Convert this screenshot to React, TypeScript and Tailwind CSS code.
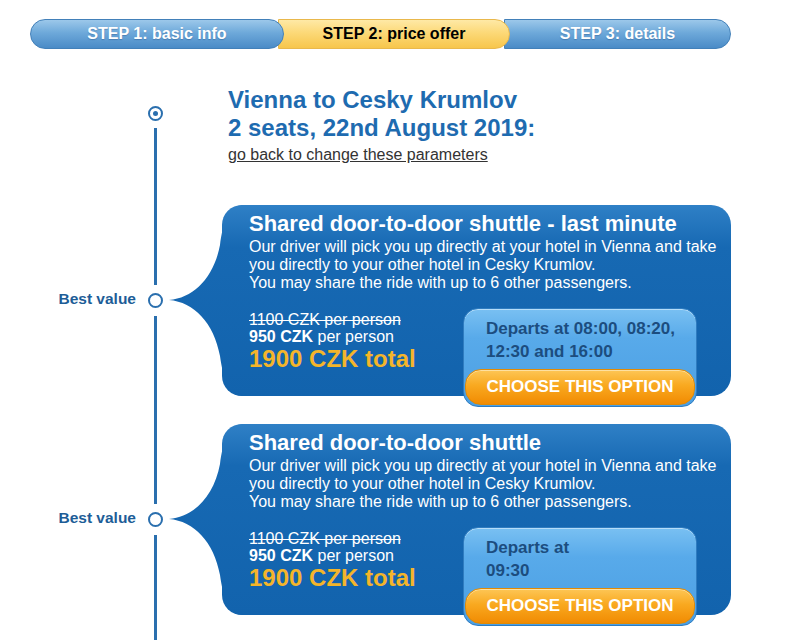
import React from 'react';

const RAIL = 'bg-[#2a6fae]';

const StepBar = () => (
  <div className="flex pl-[30px] pt-[19px]">
    <div className="relative z-[3] flex h-[30px] w-[254px] items-center justify-center rounded-full border border-[#4280b9] bg-[linear-gradient(180deg,#9cc8ea_0%,#6ea9da_45%,#4a8bc7_100%)] text-[16px] font-bold text-white [text-shadow:0_1px_1px_rgba(30,70,120,0.35)]">
      STEP 1: basic info
    </div>
    <div className="relative z-[2] -ml-[6px] flex h-[30px] w-[232px] items-center justify-center rounded-r-full border border-[#e9b84c] bg-[linear-gradient(180deg,#fee9a6_0%,#fcd978_45%,#f7c64c_100%)] text-[16px] font-bold text-black">
      STEP 2: price offer
    </div>
    <div className="relative z-[1] -ml-[6px] flex h-[30px] w-[227px] items-center justify-center rounded-r-full border border-[#4280b9] bg-[linear-gradient(180deg,#9cc8ea_0%,#6ea9da_45%,#4a8bc7_100%)] text-[16px] font-bold text-white [text-shadow:0_1px_1px_rgba(30,70,120,0.35)]">
      STEP 3: details
    </div>
  </div>
);

const Connector = () => (
  <svg
    className="absolute -left-[60px] top-0"
    width="82"
    height="191"
    viewBox="0 0 82 191"
  >
    <defs>
      <linearGradient id="cardfill" x1="0" y1="0" x2="0" y2="191" gradientUnits="userSpaceOnUse">
        <stop offset="0" stopColor="#2f80c6" />
        <stop offset="0.22" stopColor="#1769b3" />
        <stop offset="1" stopColor="#1263ad" />
      </linearGradient>
    </defs>
    <path
      d="M7,95 C32,93 52,72 58,40 C61,18 66,0 82,0 L82,191 C66,191 61,172 58,151 C52,118 32,97 7,95 Z"
      fill="url(#cardfill)"
    />
  </svg>
);

interface OfferProps {
  title: string;
  departs: React.ReactNode;
}

const OfferCard = ({ title, departs }: OfferProps) => (
  <div className="relative h-[191px] w-[509px] rounded-[20px] bg-[linear-gradient(180deg,#2f80c6_0%,#1769b3_22%,#1263ad_100%)] text-white">
    <Connector />
    <div className="relative pl-[27px] pt-[6px]">
      <h2 className="text-[22px] font-bold leading-[26px]">{title}</h2>
      <p className="mt-[1px] text-[16px] leading-[18px]">
        Our driver will pick you up directly at your hotel in Vienna and take
        <br />
        you directly to your other hotel in Cesky Krumlov.
        <br />
        You may share the ride with up to 6 other passengers.
      </p>
      <div className="mt-[16px] flex items-start">
        <div className="w-[214px] pt-[3px]">
          <div className="text-[16px] leading-[17px] line-through">1100 CZK per person</div>
          <div className="text-[16px] leading-[18px]">
            <span className="font-bold">950 CZK</span> per person
          </div>
          <div className="text-[24px] font-bold leading-[26px] text-[#f4b52a]">
            1900 CZK total
          </div>
        </div>
        <div className="flex h-[99px] w-[234px] flex-col rounded-[15px] border border-[#2f7cc0] bg-[linear-gradient(180deg,#79c0f2_0%,#58aaea_30%,#4b9fe3_100%)] p-[1px] shadow-[inset_0_1px_0_#b5ddf9]">
          <div className="flex-1 pl-[21px] pt-[7px] text-[17px] font-bold leading-[23px] text-[#1c4d7f]">
            {departs}
          </div>
          <button
            type="button"
            className="h-[36px] w-full rounded-[16px] border border-[#e08a06] bg-[linear-gradient(180deg,#fdc656_0%,#f9a920_45%,#f18b02_100%)] text-[17px] font-bold text-white shadow-[inset_0_1px_0_#fee0a0]"
          >
            CHOOSE THIS OPTION
          </button>
        </div>
      </div>
    </div>
  </div>
);

const RailLine = ({ className = '' }: { className?: string }) => (
  <div className={`w-[3px] ${RAIL} ${className}`} />
);

const OfferRow = (props: OfferProps) => (
  <>
    <div className="flex h-[191px]">
      <div className="flex w-[113px] items-center justify-end pb-[3px] pr-[7px] text-[15.5px] font-bold text-[#1d5d97]">
        Best value
      </div>
      <div className="flex w-[24px] flex-col items-center">
        <RailLine className="flex-1" />
        <div className="my-[8px] h-[15px] w-[15px] rounded-full border-[2.5px] border-[#2a6fae] bg-white" />
        <RailLine className="flex-1" />
      </div>
      <div className="w-[55px]" />
      <OfferCard {...props} />
    </div>
    <div className="flex h-[28px]">
      <div className="w-[113px]" />
      <div className="flex w-[24px] justify-center">
        <RailLine />
      </div>
    </div>
  </>
);

export default function App() {
  return (
    <div className="h-[640px] w-[800px] overflow-hidden bg-white font-['Liberation_Sans',Arial,sans-serif]">
      <StepBar />
      <div className="mt-[37px] flex flex-col pl-[30px]">
        {/* route header */}
        <div className="flex h-[119px]">
          <div className="w-[113px]" />
          <div className="flex w-[24px] flex-col items-center pt-[20px]">
            <div className="flex h-[15px] w-[15px] items-center justify-center rounded-full border-[2.5px] border-[#2a6fae]">
              <div className="h-[5px] w-[5px] rounded-full bg-[#2a6fae]" />
            </div>
            <RailLine className="mt-[7px] flex-1" />
          </div>
          <div className="w-[55px]" />
          <div className="pl-[6px]">
            <h1 className="text-[24px] font-bold leading-[28px] text-[#1e6bb0]">
              Vienna to Cesky Krumlov
              <br />
              2 seats, 22nd August 2019:
            </h1>
            <a href="#" className="mt-[4px] block text-[16px] leading-[18px] text-[#333] underline">
              go back to change these parameters
            </a>
          </div>
        </div>

        <OfferRow
          title="Shared door-to-door shuttle - last minute"
          departs={
            <>
              Departs at 08:00, 08:20,
              <br />
              12:30 and 16:00
            </>
          }
        />
        <OfferRow
          title="Shared door-to-door shuttle"
          departs={
            <>
              Departs at
              <br />
              09:30
            </>
          }
        />
      </div>
    </div>
  );
}
